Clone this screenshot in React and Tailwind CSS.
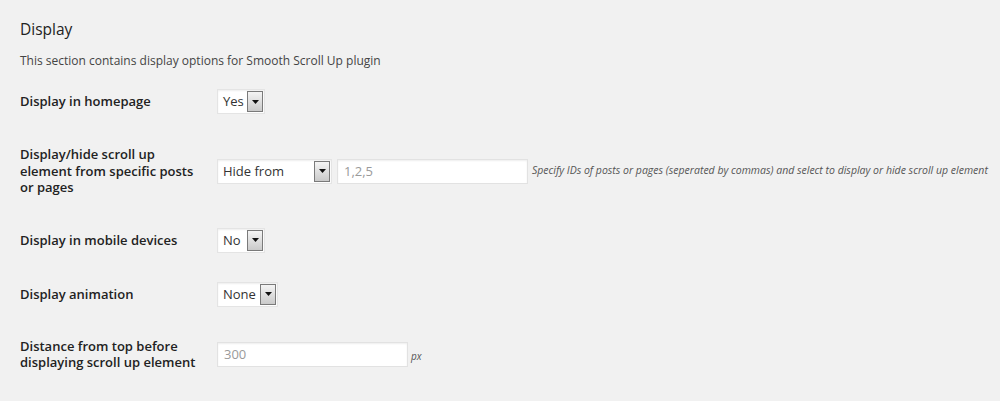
import React from "react";

// small dropdown imitation with the old-style arrow button
function Select({ value, width }) {
  return (
    <div
      className={`flex items-center justify-between h-[25px] bg-white border border-[#e4e4e4] shadow-[inset_0_1px_2px_rgba(0,0,0,0.07)] pl-[5px] pr-[1px] ${width}`}
    >
      <span className="text-[13px] text-[#333] leading-none">{value}</span>
      <span className="flex items-center justify-center w-[16px] h-[21px] border border-[#7a7a7a] bg-gradient-to-b from-[#f4f4f4] to-[#cacaca]">
        <svg width="7" height="4" viewBox="0 0 7 4">
          <path d="M0 0 H7 L3.5 4 Z" fill="#111" />
        </svg>
      </span>
    </div>
  );
}

function TextInput({ value }) {
  return (
    <div className="flex items-center w-[191px] h-[25px] bg-white border border-[#e2e2e2] shadow-[inset_0_1px_2px_rgba(0,0,0,0.07)] px-[6px]">
      <span className="text-[13px] text-[#9a9a9a] leading-none">{value}</span>
    </div>
  );
}

function Row({ label, height, children }) {
  return (
    <div className={`flex items-center ${height}`}>
      <div className="w-[197px] shrink-0 pr-[19px] text-[13px] font-semibold leading-[16.5px] text-[#222]">
        {label}
      </div>
      <div className="flex items-center">{children}</div>
    </div>
  );
}

export default function App() {
  return (
    <div
      className="w-[1000px] h-[401px] bg-[#f1f1f1] px-5 overflow-hidden"
      style={{ fontFamily: '"Open Sans", "Noto Sans", sans-serif' }}
    >
      <h2 className="pt-[17px] text-[15.5px] leading-[24px] text-[#222]">Display</h2>
      <p className="mt-[10px] text-[12px] leading-[20px] text-[#444]">
        This section contains display options for Smooth Scroll Up plugin
      </p>

      <div className="mt-[3px]">
        <Row label="Display in homepage" height="h-[55px]">
          <Select value="Yes" width="w-[48px]" />
        </Row>

        <Row label="Display/hide scroll up element from specific posts or pages" height="h-[84px]">
          <Select value="Hide from" width="w-[115px]" />
          <div className="ml-[5px]">
            <TextInput value="1,2,5" />
          </div>
          <span className="ml-[4px] text-[10.5px] italic text-[#555] whitespace-nowrap">
            Specify IDs of posts or pages (seperated by commas) and select to display or hide scroll up element
          </span>
        </Row>

        <Row label="Display in mobile devices" height="h-[54px]">
          <Select value="No" width="w-[48px]" />
        </Row>

        <Row label="Display animation" height="h-[54px]">
          <Select value="None" width="w-[61px]" />
        </Row>

        <Row label="Distance from top before displaying scroll up element" height="h-[66px]">
          <TextInput value="300" />
          <span className="ml-[3px] mt-[4px] text-[10px] italic text-[#555]">px</span>
        </Row>
      </div>
    </div>
  );
}
